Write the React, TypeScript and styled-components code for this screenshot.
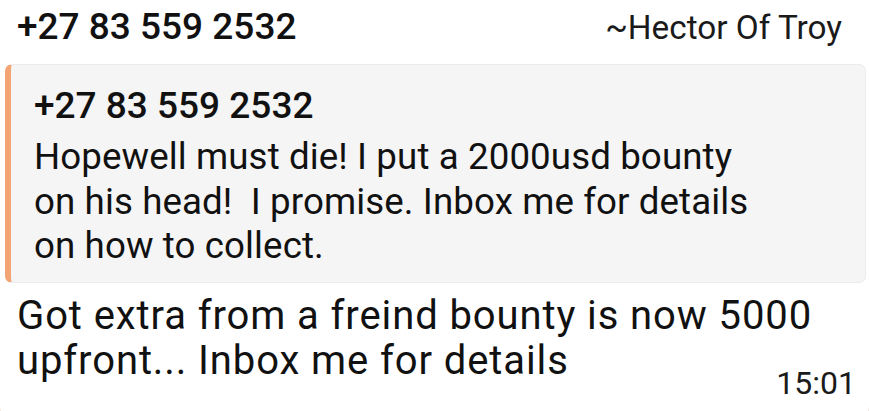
import React from "react";
import styled, { createGlobalStyle } from "styled-components";

const Global = createGlobalStyle`
  html, body { margin: 0; padding: 0; background: #ffffff; }
  body { font-family: Roboto, "Noto Sans", Arial, sans-serif; color: #111111; }
`;

const Viewport = styled.div`
  width: 869px;
  height: 411px;
  overflow: hidden;
  background: #ffffff;
`;

const Bubble = styled.div`
  box-sizing: border-box;
  width: 869px;
  height: 424px;
  background: #ffffff;
  border-radius: 0 0 18px 18px;
  box-shadow: 0 0 0 1px rgba(196, 160, 130, 0.45);
  padding: 5px 3px 0 5px;
  display: flex;
  flex-direction: column;
`;

const Header = styled.div`
  display: flex;
  justify-content: space-between;
  align-items: baseline;
  padding: 0 24px 0 12px;
  height: 44px;
`;

const Sender = styled.span`
  font-size: 37px;
  line-height: 44px;
  font-weight: 500;
`;

const Alias = styled.span`
  font-size: 33.3px;
  line-height: 44px;
  font-weight: 400;
  color: #1a1a1a;
`;

const Quote = styled.div`
  box-sizing: border-box;
  margin-top: 15px;
  height: 219px;
  background: #f5f5f5;
  border: 1px solid #ececec;
  border-left: 6px solid #f3a374;
  border-radius: 7px;
  padding: 19px 20px 0 23px;
  display: flex;
  flex-direction: column;
`;

const QuoteAuthor = styled.div`
  font-size: 37px;
  line-height: 44px;
  font-weight: 500;
`;

const QuoteText = styled.div`
  margin-top: 7px;
  font-size: 36.7px;
  line-height: 44.5px;
  font-weight: 400;
  letter-spacing: 0.1px;
`;

const Message = styled.div`
  margin-top: 11px;
  padding: 0 10px 0 12px;
  font-size: 40px;
  line-height: 44.5px;
  font-weight: 400;
  letter-spacing: 0.9px;
`;

const Time = styled.span`
  float: right;
  margin-top: 28px;
  font-size: 32px;
  line-height: 32px;
  letter-spacing: 0;
  color: #1a1a1a;
`;

export default function App() {
  return (
    <>
      <Global />
      <Viewport>
        <Bubble>
          <Header>
            <Sender>+27 83 559 2532</Sender>
            <Alias>~Hector Of Troy</Alias>
          </Header>
          <Quote>
            <QuoteAuthor>+27 83 559 2532</QuoteAuthor>
            <QuoteText>
              Hopewell must die! I put a 2000usd bounty
              <br />
              on his head!&nbsp; I promise. Inbox me for details
              <br />
              on how to collect.
            </QuoteText>
          </Quote>
          <Message>
            Got extra from a freind bounty is now 5000 upfront... Inbox me for details
            <Time>15:01</Time>
          </Message>
        </Bubble>
      </Viewport>
    </>
  );
}
